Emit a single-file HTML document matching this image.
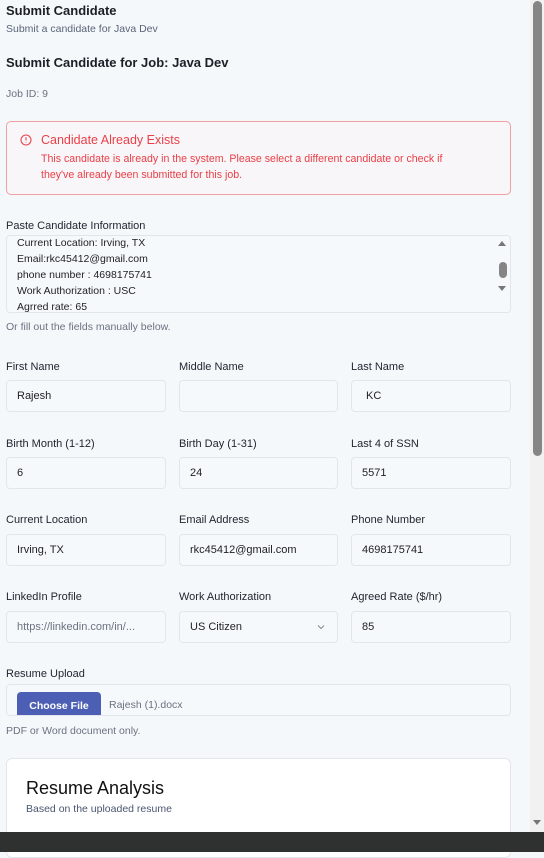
<!DOCTYPE html>
<html><head><style>
*{box-sizing:border-box;margin:0;padding:0}
body{width:544px;height:852px;overflow:hidden;background:#f5f8fb;font-family:"Liberation Sans",sans-serif;position:relative;color:#1c1f26}
.a{position:absolute;white-space:nowrap}
.lbl{font-size:11px;color:#222630}
.in{position:absolute;height:32px;border:1px solid #e2e6ec;border-radius:4px;background:#f6f9fc;font-size:11px;padding-left:10px;line-height:30px;color:#222}
</style></head><body>
<div class="a" style="left:6px;top:3px;font-size:13px;font-weight:bold">Submit Candidate</div>
<div class="a" style="left:6px;top:23px;font-size:10.5px;color:#5a6478">Submit a candidate for Java Dev</div>
<div class="a" style="left:6px;top:55px;font-size:13px;font-weight:bold">Submit Candidate for Job: Java Dev</div>
<div class="a" style="left:6px;top:88px;font-size:10.5px;color:#6b7280">Job ID: 9</div>
<div class="a" style="left:6px;top:121px;width:505px;height:74px;border:1px solid #f1a0a4;border-radius:5px;background:#f8f6f8"></div>
<svg class="a" style="left:20px;top:134px" width="12" height="12" viewBox="0 0 12 12"><circle cx="6" cy="6" r="5" fill="none" stroke="#e5484d" stroke-width="1.1"/><path d="M6 3.3v3.2M6 8.2v.6" stroke="#e5484d" stroke-width="1.1"/></svg>
<div class="a" style="left:41px;top:133px;font-size:12.5px;color:#ea3f47">Candidate Already Exists</div>
<div class="a" style="left:41px;top:151px;font-size:10.6px;color:#ea3f47;line-height:16px">This candidate is already in the system. Please select a different candidate or check if<br>they've already been submitted for this job.</div>
<div class="a lbl" style="left:6px;top:220px">Paste Candidate Information</div>
<div class="a" style="left:6px;top:235px;width:505px;height:78px;border:1px solid #e2e6ec;border-radius:4px;background:#f6f9fc;overflow:hidden">
<div style="position:absolute;left:10px;top:-1px;font-size:10.5px;line-height:16px;color:#222">Current Location: Irving, TX<br>Email:rkc45412@gmail.com<br>phone number : 4698175741<br>Work Authorization : USC<br>Agrred rate: 65</div>
<div style="position:absolute;right:4px;top:5px;width:0;height:0;border:4px solid transparent;border-bottom:5px solid #777;border-top:0"></div>
<div style="position:absolute;right:3px;top:26px;width:8px;height:16px;background:#858585;border-radius:4px"></div>
<div style="position:absolute;right:4px;top:50px;width:0;height:0;border:4px solid transparent;border-top:5px solid #777;border-bottom:0"></div>
</div>
<div class="a" style="left:6px;top:321px;font-size:10.5px;color:#6b7280">Or fill out the fields manually below.</div>

<div class="a lbl" style="left:6px;top:361px">First Name</div>
<div class="a lbl" style="left:179px;top:361px">Middle Name</div>
<div class="a lbl" style="left:351px;top:361px">Last Name</div>
<div class="in" style="left:6px;top:380px;width:160px">Rajesh</div>
<div class="in" style="left:179px;top:380px;width:159px"></div>
<div class="in" style="left:351px;top:380px;width:160px;padding-left:14px">KC</div>

<div class="a lbl" style="left:6px;top:438px">Birth Month (1-12)</div>
<div class="a lbl" style="left:179px;top:438px">Birth Day (1-31)</div>
<div class="a lbl" style="left:351px;top:438px">Last 4 of SSN</div>
<div class="in" style="left:6px;top:457px;width:160px">6</div>
<div class="in" style="left:179px;top:457px;width:159px">24</div>
<div class="in" style="left:351px;top:457px;width:160px">5571</div>

<div class="a lbl" style="left:6px;top:514px">Current Location</div>
<div class="a lbl" style="left:179px;top:514px">Email Address</div>
<div class="a lbl" style="left:351px;top:514px">Phone Number</div>
<div class="in" style="left:6px;top:534px;width:160px">Irving, TX</div>
<div class="in" style="left:179px;top:534px;width:159px">rkc45412@gmail.com</div>
<div class="in" style="left:351px;top:534px;width:160px">4698175741</div>

<div class="a lbl" style="left:6px;top:591px">LinkedIn Profile</div>
<div class="a lbl" style="left:179px;top:591px">Work Authorization</div>
<div class="a lbl" style="left:351px;top:591px">Agreed Rate ($/hr)</div>
<div class="in" style="left:6px;top:611px;width:160px;color:#6b7280">https://linkedin.com/in/...</div>
<div class="in" style="left:179px;top:611px;width:159px">US Citizen<svg style="position:absolute;right:12px;top:12px" width="8" height="6" viewBox="0 0 8 6"><path d="M1 1.5l3 3 3-3" fill="none" stroke="#888" stroke-width="1"/></svg></div>
<div class="in" style="left:351px;top:611px;width:160px">85</div>

<div class="a lbl" style="left:6px;top:668px">Resume Upload</div>
<div class="a" style="left:6px;top:684px;width:505px;height:32px;border:1px solid #e2e6ec;border-radius:4px;background:#f6f9fc;overflow:hidden">
<div style="position:absolute;left:10px;top:7px;width:84px;height:30px;background:#4d5fb5;border-radius:4px;color:#fff;font-size:10.5px;font-weight:bold;text-align:center;line-height:28px">Choose File</div>
<div style="position:absolute;left:102px;top:14px;font-size:10.5px;color:#6b7280">Rajesh (1).docx</div>
</div>
<div class="a" style="left:6px;top:725px;font-size:10.5px;color:#6b7280">PDF or Word document only.</div>
<div class="a" style="left:6px;top:758px;width:505px;height:100px;border:1px solid #e2e6ec;border-radius:6px;background:#fff"></div>
<div class="a" style="left:26px;top:778px;font-size:18px;color:#111">Resume Analysis</div>
<div class="a" style="left:26px;top:803px;font-size:10.5px;color:#4a5570">Based on the uploaded resume</div>

<div class="a" style="left:530px;top:0;width:14px;height:832px;background:#f1f1f1"></div>
<div class="a" style="left:533px;top:1px;width:9px;height:455px;background:#858585;border-radius:5px"></div>
<div class="a" style="left:533px;top:820px;width:0;height:0;border:4px solid transparent;border-top:5px solid #777;border-bottom:0"></div>
<div class="a" style="left:0;top:832px;width:544px;height:20px;background:#2f3030"></div>
</body></html>
